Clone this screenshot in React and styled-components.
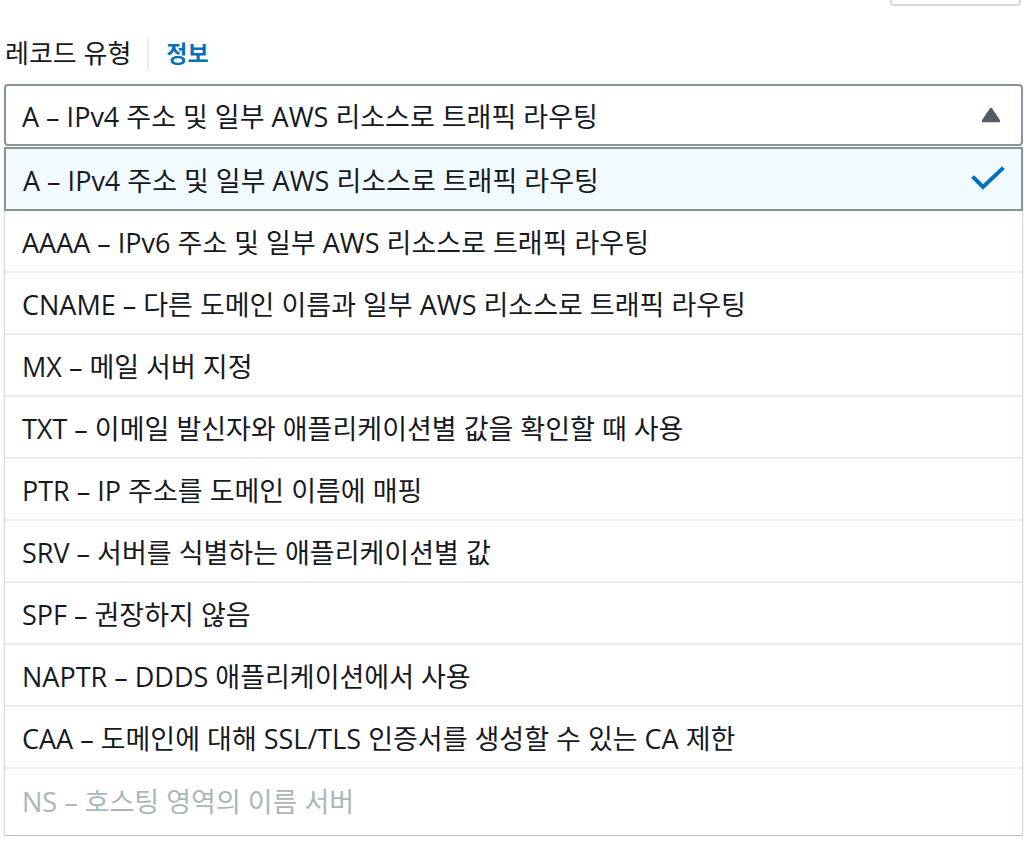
import React from "react";
import styled, { createGlobalStyle } from "styled-components";

const Global = createGlobalStyle`
  html, body { margin: 0; padding: 0; background: #ffffff; }
  body { font-family: "Open Sans", "Noto Sans CJK KR", sans-serif; color: #16191f; }
`;

const Page = styled.div`
  width: 1028px;
  display: flex;
  flex-direction: column;
`;

const TopBar = styled.div`
  height: 6px;
  overflow: hidden;
  display: flex;
  justify-content: flex-end;
  align-items: flex-end;
  padding-right: 7px;
`;

const GhostButton = styled.div`
  width: 131px;
  height: 40px;
  box-sizing: border-box;
  border: 2px solid #d5dbdb;
  border-radius: 4px;
  flex-shrink: 0;
`;

const LabelRow = styled.div`
  margin-top: 31px;
  margin-left: 5px;
  height: 33px;
  display: flex;
  align-items: center;
`;

const Label = styled.span`
  font-size: 26px;
  color: #16191f;
  line-height: 33px;
`;

const Divider = styled.span`
  width: 2px;
  height: 33px;
  background: #eaeded;
  margin: 0 17px 0 16px;
`;

const InfoLink = styled.span`
  font-size: 23px;
  font-weight: 700;
  color: #0073bb;
  line-height: 33px;
`;

const Field = styled.div`
  margin: 14px 5px 0 4px;
  display: flex;
  flex-direction: column;
`;

const SelectBox = styled.div`
  height: 62px;
  box-sizing: border-box;
  border: 2px solid #879596;
  border-radius: 4px;
  display: flex;
  align-items: center;
  justify-content: space-between;
  padding: 0 20px 0 16px;
  font-size: 27px;
`;

const Menu = styled.ul`
  list-style: none;
  margin: 1px 0 0;
  padding: 0 0 4px;
  border: 1px solid #d5dbdb;
  border-top: none;
  border-bottom: 1px solid #b8c2c2;
  box-shadow: 0 2px 1px rgba(84, 91, 100, 0.55);
  border-radius: 0 0 2px 2px;
`;

const Item = styled.li`
  height: ${(p) => (p.$selected ? "64px" : "62px")};
  box-sizing: border-box;
  display: flex;
  align-items: center;
  justify-content: space-between;
  padding: 0 16px 0 17px;
  font-size: 27px;
  color: ${(p) => (p.$disabled ? "#aab7b8" : "#16191f")};
  background: ${(p) => (p.$selected ? "#f1faff" : "#ffffff")};
  border: ${(p) => (p.$selected ? "2px solid #879596" : "none")};
  margin: ${(p) => (p.$selected ? "0 -1px" : "0")};
  border-bottom: ${(p) =>
    p.$selected ? "2px solid #879596" : p.$last ? "none" : "2px solid #eaeded"};
`;

const Caret = () => (
  <svg width="20" height="16" viewBox="0 0 20 16">
    <path
      d="M10 2 L18 14 L2 14 Z"
      fill="#545b64"
      stroke="#545b64"
      strokeWidth="2.5"
      strokeLinejoin="round"
    />
  </svg>
);

const Check = () => (
  <svg width="34" height="26" viewBox="0 0 34 26">
    <path
      d="M3 12 L12 21 L31 3"
      fill="none"
      stroke="#0073bb"
      strokeWidth="4"
      strokeLinecap="square"
    />
  </svg>
);

const options = [
  "A – IPv4 주소 및 일부 AWS 리소스로 트래픽 라우팅",
  "AAAA – IPv6 주소 및 일부 AWS 리소스로 트래픽 라우팅",
  "CNAME – 다른 도메인 이름과 일부 AWS 리소스로 트래픽 라우팅",
  "MX – 메일 서버 지정",
  "TXT – 이메일 발신자와 애플리케이션별 값을 확인할 때 사용",
  "PTR – IP 주소를 도메인 이름에 매핑",
  "SRV – 서버를 식별하는 애플리케이션별 값",
  "SPF – 권장하지 않음",
  "NAPTR – DDDS 애플리케이션에서 사용",
  "CAA – 도메인에 대해 SSL/TLS 인증서를 생성할 수 있는 CA 제한",
  "NS – 호스팅 영역의 이름 서버",
];

export default function App() {
  return (
    <Page>
      <Global />
      <TopBar>
        <GhostButton />
      </TopBar>
      <LabelRow>
        <Label>레코드 유형</Label>
        <Divider />
        <InfoLink>정보</InfoLink>
      </LabelRow>
      <Field>
        <SelectBox>
          <span>{options[0]}</span>
          <Caret />
        </SelectBox>
        <Menu>
          {options.map((o, i) => (
            <Item
              key={o}
              $selected={i === 0}
              $disabled={i === options.length - 1}
              $last={i === options.length - 1}
            >
              <span>{o}</span>
              {i === 0 && <Check />}
            </Item>
          ))}
        </Menu>
      </Field>
    </Page>
  );
}
